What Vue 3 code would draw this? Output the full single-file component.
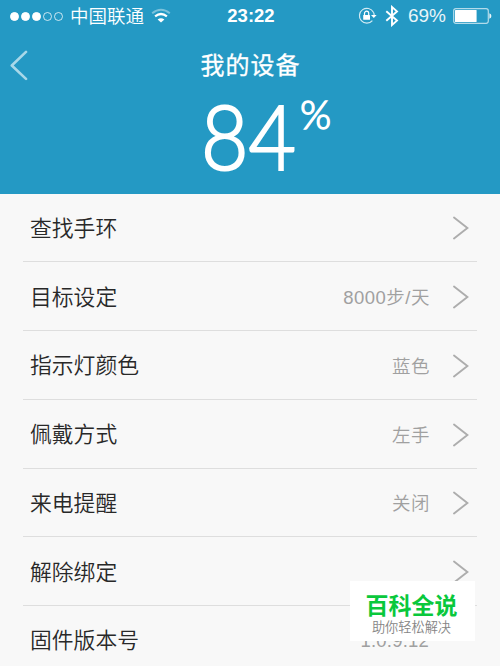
<template>
    <div class="screen">
        <header class="header">
            <div class="status-bar">
                <div class="status-left">
                    <div class="signal">
                        <i v-for="n in 5" :key="n" class="dot" :class="{ filled: n <= 3 }"></i>
                    </div>
                    <span class="carrier">中国联通</span>
                    <svg class="wifi" width="20" height="16" viewBox="0 0 20 16">
                        <path d="M1.2 5.2 Q10 -1.8 18.8 5.2" fill="none" stroke="#fff" stroke-width="2" opacity="0.4" />
                        <path d="M4.1 8.4 Q10 3.6 15.9 8.4" fill="none" stroke="#fff" stroke-width="2.2" />
                        <path d="M6.6 11.6 Q10 8.8 13.4 11.6 L10 14.6 Z" fill="#fff" />
                    </svg>
                </div>
                <span class="clock">23:22</span>
                <div class="status-right">
                    <svg class="lock" width="19" height="18" viewBox="0 0 19 18">
                        <path d="M15.4 5.3 A7.4 7.4 0 1 0 14.4 13.6" fill="none" stroke="#fff" stroke-width="1.2" opacity="0.8" />
                        <path d="M15.4 5.3 Q16.2 6.6 16.2 8.5" fill="none" stroke="#fff" stroke-width="1.2" opacity="0.8" />
                        <path d="M13 8 H18.6 L15.8 11 Z" fill="#fff" />
                        <rect x="5.2" y="8" width="6.8" height="4.8" rx="0.5" fill="#fff" />
                        <path d="M6.5 8.4 V6.3 A2.1 2.1 0 0 1 10.7 6.3 V8.4" fill="none" stroke="#fff" stroke-width="1.2" />
                    </svg>
                    <svg class="bluetooth" width="14" height="22" viewBox="0 0 14 22">
                        <path d="M1.3 6.2 L12 15.6 L7 20 V2 L12 6.4 L1.3 15.8" fill="none" stroke="#fff" stroke-width="1.9" />
                    </svg>
                    <span class="battery-text">69%</span>
                    <svg class="battery" width="40" height="16" viewBox="0 0 40 16">
                        <rect x="0.7" y="0.7" width="34.6" height="14.6" rx="2.2" fill="none" stroke="#fff" stroke-width="1.2" opacity="0.65" />
                        <rect x="2" y="2" width="21.6" height="12" rx="0.6" fill="#fff" />
                        <path d="M36.4 5.2 Q38.4 5.8 38.4 8 Q38.4 10.2 36.4 10.8 Z" fill="#fff" opacity="0.9" />
                    </svg>
                </div>
            </div>
            <div class="nav-bar">
                <svg class="back" width="18" height="32" viewBox="0 0 18 32">
                    <path d="M16 2.9 L1.8 16.5 L16 29.9" fill="none" stroke="#a8d8e9" stroke-width="2.6" stroke-linecap="round" stroke-linejoin="round" />
                </svg>
                <h1 class="title">我的设备</h1>
            </div>
            <div class="level">
                <span class="level-number">84</span>
                <span class="level-unit">%</span>
            </div>
        </header>

        <ul class="list">
            <li v-for="item in items" :key="item.label" class="row">
                <span class="label">{{ item.label }}</span>
                <span class="value">{{ item.value }}</span>
                <svg v-if="item.link" class="arrow" width="16" height="24" viewBox="0 0 16 24">
                    <path d="M1 1.5 L14.4 12 L1 22.5" fill="none" stroke="#adadad" stroke-width="1.9" stroke-linecap="round" />
                </svg>
            </li>
        </ul>

        <div class="watermark">
            <strong>百科全说</strong>
            <span>助你轻松解决</span>
        </div>
    </div>
</template>

<script setup>
    const items = [
        { label: '查找手环', value: '', link: true },
        { label: '目标设定', value: '8000步/天', link: true },
        { label: '指示灯颜色', value: '蓝色', link: true },
        { label: '佩戴方式', value: '左手', link: true },
        { label: '来电提醒', value: '关闭', link: true },
        { label: '解除绑定', value: '', link: true },
        { label: '固件版本号', value: '1.0.9.12', link: false },
    ];
</script>

<style>
    body {
        margin: 0;
        overflow: hidden;
    }
</style>

<style scoped>
    .screen {
        position: relative;
        width: 500px;
        height: 666px;
        overflow: hidden;
        background: #f8f8f8;
        font-family: "Liberation Sans", "Noto Sans CJK SC", sans-serif;
    }
    .header {
        height: 193.5px;
        background: #2499c4;
        color: #fff;
    }
    .status-bar {
        display: grid;
        grid-template-columns: 1fr auto 1fr;
        align-items: center;
        height: 32px;
        padding: 0 8px 0 10px;
    }
    .status-left,
    .status-right {
        display: flex;
        align-items: center;
    }
    .status-right {
        justify-content: flex-end;
        margin-right: -1px;
    }
    .signal {
        display: flex;
        gap: 2px;
    }
    .dot {
        box-sizing: border-box;
        width: 9px;
        height: 9px;
        border: 1px solid rgba(255, 255, 255, 0.75);
        border-radius: 50%;
    }
    .dot.filled {
        background: #fff;
        border-color: #fff;
    }
    .carrier {
        margin-left: 7px;
        padding-top: 1px;
        font-size: 18.5px;
        font-weight: 350;
        line-height: 31px;
    }
    .wifi {
        margin-left: 7px;
    }
    .clock {
        font-size: 18.5px;
        font-weight: bold;
    }
    .bluetooth {
        margin-left: 8px;
    }
    .battery-text {
        margin-left: 9px;
        font-size: 19px;
        opacity: 0.9;
    }
    .battery {
        margin-left: 7px;
    }
    .nav-bar {
        display: flex;
        align-items: center;
        height: 66px;
        padding-left: 10px;
    }
    .title {
        flex: 1;
        margin: 0 27px 4px 0;
        font-size: 24px;
        font-weight: 400;
        letter-spacing: 1px;
        text-align: center;
        -webkit-text-stroke: 0.3px #fff;
    }
    .level {
        display: flex;
        align-items: flex-start;
        padding-left: 201px;
        font-family: Lato, sans-serif;
        font-weight: 300;
    }
    .level-number {
        width: 97px;
        font-size: 91px;
        line-height: 74px;
        transform: scaleX(0.9);
        transform-origin: left;
        -webkit-text-stroke: 2.2px #fff;
    }
    .level-unit {
        margin-left: 2px;
        font-size: 40px;
        line-height: 33px;
        -webkit-text-stroke: 1.4px #fff;
    }
    .list {
        margin: 0;
        padding: 0 23px;
        list-style: none;
    }
    .row {
        display: flex;
        align-items: center;
        box-sizing: border-box;
        height: 68.75px;
        padding: 0 8px 0 7px;
        border-bottom: 1px solid #dedede;
    }
    .label {
        flex: 1;
        padding-bottom: 2px;
        color: #282828;
        font-size: 21.8px;
        font-weight: 350;
    }
    .arrow {
        margin-top: 2px;
    }
    .value {
        margin-right: 23px;
        color: #a0a0a0;
        font-size: 18.5px;
        font-weight: 350;
        letter-spacing: 0.5px;
    }
    .row:last-child .value {
        margin: 3px 40px 0 0;
        letter-spacing: 0.2px;
    }
    .watermark {
        position: absolute;
        left: 350px;
        top: 581px;
        display: flex;
        flex-direction: column;
        align-items: center;
        box-sizing: border-box;
        width: 125px;
        height: 60px;
        padding-right: 2px;
        background: #fff;
    }
    .watermark strong {
        margin-top: 10px;
        color: #09c83c;
        font-size: 23px;
        font-weight: 700;
        line-height: 30px;
    }
    .watermark span {
        color: #858585;
        font-size: 13.2px;
        font-weight: 350;
        line-height: 13px;
    }
</style>
